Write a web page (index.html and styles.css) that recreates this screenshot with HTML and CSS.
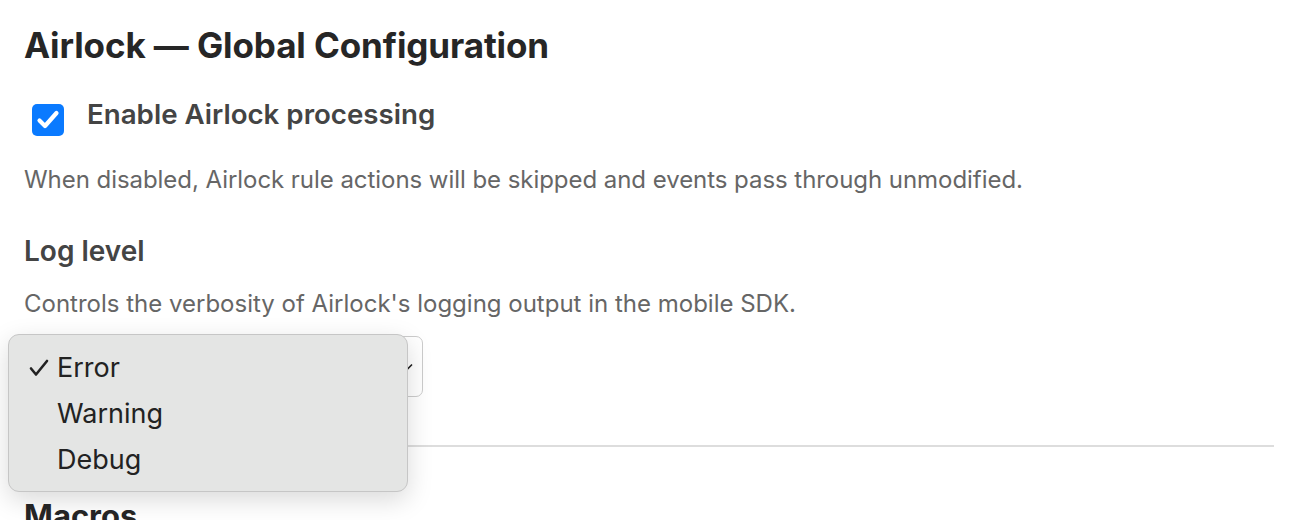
FILE: index.html
```html
<!DOCTYPE html>
<html lang="en">
<head>
    <meta charset="UTF-8">
    <meta name="viewport" content="width=device-width, initial-scale=1.0">
    <title>Airlock — Global Configuration</title>
    <link rel="stylesheet" href="styles.css">
</head>
<body>
    <main class="page">
        <h1>Airlock — Global Configuration</h1>

        <label class="toggle-row">
            <span class="checkbox">
                <svg viewBox="0 0 32 32" width="32" height="32" aria-hidden="true">
                    <path d="M7.5 16.5 L13 22 L24.5 9" fill="none" stroke="#fff" stroke-width="4.2" stroke-linecap="round" stroke-linejoin="round"/>
                </svg>
            </span>
            <span class="toggle-label">Enable Airlock processing</span>
        </label>
        <p class="hint first">When disabled, Airlock rule actions will be skipped and events pass through unmodified.</p>

        <h3 class="field-title">Log level</h3>
        <p class="hint">Controls the verbosity of Airlock's logging output in the mobile SDK.</p>

        <div class="select-wrap">
            <div class="select">
                <span class="select-value">Error</span>
                <svg class="chevron" viewBox="0 0 12 10" width="12" height="10" aria-hidden="true">
                    <path d="M1 2.5 L6 7.5 L11 2.5" fill="none" stroke="#222" stroke-width="1.6"/>
                </svg>
            </div>
            <!-- native popup, open -->
            <ul class="select-menu">
                <li class="selected">
                    <svg class="tick" viewBox="0 0 20 18" width="20" height="18" aria-hidden="true">
                        <path d="M2 9.5 L7 15.5 L18 2" fill="none" stroke="#222" stroke-width="2.6" stroke-linecap="round" stroke-linejoin="round"/>
                    </svg>
                    Error
                </li>
                <li>Warning</li>
                <li>Debug</li>
            </ul>
        </div>

        <hr class="divider">

        <h2>Macros</h2>
    </main>
</body>
</html>
```

FILE: styles.css
```css
body {
    margin: 0;
    padding: 0;
    background-color: #fff;
    font-family: Inter, "Noto Sans", sans-serif;
    color: #444;
}
.page {
    padding: 25px 20px 0 24px;
}
h1 {
    margin: 0;
    font-size: 35px;
    line-height: 40px;
    font-weight: 700;
    color: #262626;
    letter-spacing: -0.1px;
}
.toggle-row {
    display: flex;
    align-items: flex-start;
    gap: 23px;
    margin-top: 39px;
    padding-left: 8px;
}
.checkbox {
    width: 32px;
    height: 32px;
    border-radius: 5px;
    background-color: #0a7aff;
}
.checkbox svg {
    display: block;
}
.toggle-label {
    margin-top: -6px;
    font-size: 27.7px;
    line-height: 32px;
    font-weight: 600;
    color: #444;
}
.hint {
    margin: 21px 0 0;
    font-size: 24px;
    line-height: 30px;
    color: #666;
}
.hint.first {
    margin-top: 29px;
    letter-spacing: -0.05px;
}
.field-title {
    margin: 39px 0 0;
    font-size: 28px;
    line-height: 34px;
    font-weight: 600;
    color: #444;
}
.select-wrap {
    position: relative;
    margin-top: 17px;
}
.select {
    width: 399px;
    height: 61px;
    box-sizing: border-box;
    border: 1px solid #ccc;
    border-radius: 7px;
    display: flex;
    align-items: center;
    justify-content: space-between;
    padding: 0 9px 0 16px;
    font-size: 27px;
    color: #222;
}
.select-value {
    visibility: hidden;
}
.select-menu {
    position: absolute;
    left: -16px;
    top: -2px;
    width: 400px;
    box-sizing: border-box;
    margin: 0;
    padding: 10px 0 8px;
    list-style: none;
    background-color: #e4e5e4;
    border: 1px solid #c6c6c6;
    border-radius: 11px;
    box-shadow: 0 8px 26px rgba(0, 0, 0, 0.15);
    font-size: 27px;
    color: #222;
}
.select-menu li {
    position: relative;
    height: 46px;
    line-height: 46px;
    padding-left: 48px;
}
.tick {
    position: absolute;
    left: 20px;
    top: 14px;
}
.divider {
    border: none;
    border-top: 2px solid #ddd;
    margin: 48px 0 0;
}
h2 {
    margin: 51px 0 0;
    font-size: 31px;
    line-height: 36px;
    font-weight: 700;
    color: #262626;
}
```
